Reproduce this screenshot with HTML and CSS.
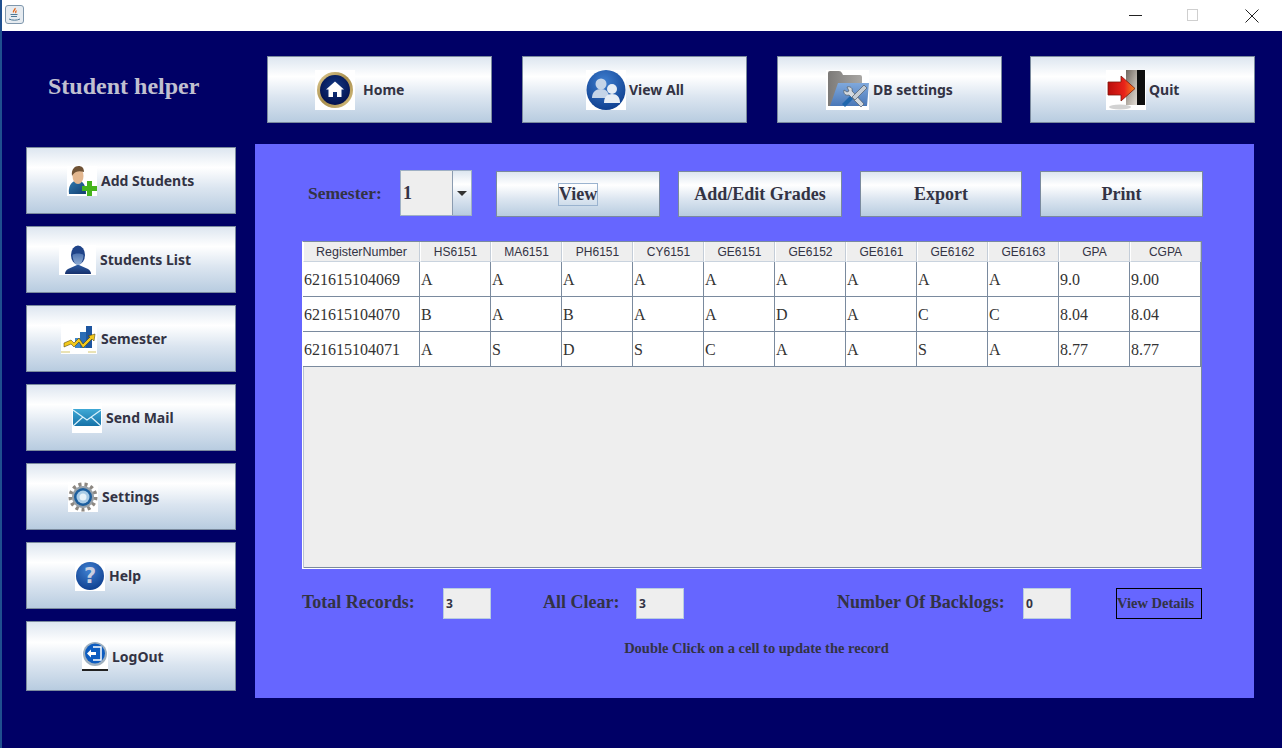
FILE: index.html
```html
<!DOCTYPE html>
<html lang="en">
<head>
<meta charset="utf-8">
<title>Student helper</title>
<link rel="stylesheet" href="styles.css">
</head>
<body>
<svg class="defs" width="0" height="0" aria-hidden="true">
  <defs>
    <radialGradient id="navyBall" cx="50%" cy="40%" r="60%"><stop offset="0" stop-color="#123a86"/><stop offset="1" stop-color="#04124e"/></radialGradient>
    <linearGradient id="gold" x1="0" y1="0" x2="1" y2="1"><stop offset="0" stop-color="#e3cf97"/><stop offset=".5" stop-color="#a88e4c"/><stop offset="1" stop-color="#d8c283"/></linearGradient>
    <radialGradient id="blueBall" cx="45%" cy="30%" r="75%"><stop offset="0" stop-color="#3f7fd0"/><stop offset="1" stop-color="#0c3c8c"/></radialGradient>
    <linearGradient id="folderFront" x1="0" y1="0" x2="0" y2="1"><stop offset="0" stop-color="#7fa8dc"/><stop offset="1" stop-color="#4a78b8"/></linearGradient>
    <linearGradient id="folderBack" x1="0" y1="0" x2="1" y2="0"><stop offset="0" stop-color="#7c7a78"/><stop offset="1" stop-color="#a9a7a4"/></linearGradient>
    <linearGradient id="redArrow" x1="0" y1="0" x2="1" y2="0"><stop offset="0" stop-color="#b90e0c"/><stop offset=".6" stop-color="#e8231a"/><stop offset="1" stop-color="#f58a1f"/></linearGradient>
    <linearGradient id="doorGrey" x1="0" y1="0" x2="1" y2="1"><stop offset="0" stop-color="#6f675f"/><stop offset=".6" stop-color="#bdb6ad"/><stop offset="1" stop-color="#e6e1da"/></linearGradient>
    <linearGradient id="mailBlue" x1="0" y1="0" x2="0" y2="1"><stop offset="0" stop-color="#3fa9d6"/><stop offset="1" stop-color="#1672a8"/></linearGradient>
    <linearGradient id="bustBlue" x1="0" y1="0" x2="0" y2="1"><stop offset="0" stop-color="#2c5aa0"/><stop offset="1" stop-color="#16306c"/></linearGradient>
    <linearGradient id="faceBlue" x1="0" y1="0" x2="0" y2="1"><stop offset="0" stop-color="#4f74b0"/><stop offset="1" stop-color="#90aed6"/></linearGradient>
    <linearGradient id="shirtBlue" x1="0" y1="0" x2="1" y2="1"><stop offset="0" stop-color="#2f78ad"/><stop offset="1" stop-color="#123f72"/></linearGradient>
  </defs>
</svg>
<header class="titlebar">
  <svg class="java-icon" viewBox="0 0 19 19" width="19" height="19">
    <rect x=".5" y=".5" width="18" height="18" rx="2.5" fill="#e6ebf0" stroke="#7f97ad"/>
    <path d="M10 3c1 1.500-2.500 2.500-1.500 4.500M11.500 5.500c-1 .8-1.300 1.500-.5 2.500" fill="none" stroke="#e2661d" stroke-width="1.300"/>
    <path d="M5.500 9.500h7M6 11.500h6M4 14c3 1.600 8 1.600 11 0" fill="none" stroke="#4d7896" stroke-width="1"/>
  </svg>
  <div class="win-controls">
    <span class="win-min"></span>
    <span class="win-max"></span>
    <svg class="win-close" viewBox="0 0 14 14" width="14" height="14"><path d="M.5.500l13 13M13.500.500l-13 13" stroke="#222" stroke-width="1" fill="none"/></svg>
  </div>
</header>

<div class="layout">
  <div class="brand">Student helper</div>

  <nav class="topnav">
    <button class="btn nav-btn home">
      <svg class="ico" viewBox="0 0 40 40" width="40" height="40"><rect width="40" height="40" fill="#fff"/><circle cx="20" cy="20" r="18" fill="url(#gold)"/><circle cx="20" cy="20" r="15" fill="url(#navyBall)"/><path d="M20 11.500 29 19.500h-2.500V27h-4.500v-5h-4v5h-4.500v-7.500H11z" fill="#fff"/></svg>
      <span class="lbl">Home</span>
    </button>
    <button class="btn nav-btn viewall">
      <svg class="ico" viewBox="0 0 40 40" width="40" height="40"><rect width="40" height="40" fill="#fff"/><ellipse cx="20" cy="20" rx="19.500" ry="20" fill="url(#blueBall)"/><circle cx="15" cy="14" r="5.500" fill="#c4d4e8"/><path d="M6 28c0-6 4-9 9-9s8 3 8 9z" fill="#c4d4e8"/><circle cx="26" cy="19" r="5" fill="#e6edf5"/><path d="M18 33c0-6 3-9 8-9s8 3 8 9z" fill="#e6edf5"/></svg>
      <span class="lbl">View All</span>
    </button>
    <button class="btn nav-btn dbset">
      <svg class="ico" viewBox="0 0 43 40" width="43" height="40"><rect width="43" height="40" fill="#fff"/><path d="M2 3q0-2 2-2h9q2 0 3 2l1 2h17q2 0 2 2v29H2z" fill="url(#folderBack)"/><path d="M12 13h31l-2 23H4z" fill="url(#folderFront)"/><path d="M21 17c3-1 6 1 5 4l12 13-3 3-12-12c-3 1-6-1-5-5l3 2 2-1z" fill="#d3d9df" stroke="#4f5a66" stroke-width=".7"/><path d="M38 15l3 3-12 12-3-3z" fill="#c4ccd4" stroke="#4f5a66" stroke-width=".7"/><path d="M27 29l-8 8-3-3 8-8z" fill="#1f66ad"/></svg>
      <span class="lbl">DB settings</span>
    </button>
    <button class="btn nav-btn quit">
      <svg class="ico" viewBox="0 0 40 40" width="40" height="40"><rect width="40" height="40" fill="#fff"/><ellipse cx="14" cy="37" rx="11" ry="2.500" fill="#d2d2d2"/><path d="M20 0h12v35H20z" fill="url(#doorGrey)"/><path d="M31 0h8v35h-8z" fill="#0e0e0e"/><path d="M2 12h13V6l14 12.500L15 31v-6H2z" fill="url(#redArrow)" stroke="#7c160c" stroke-width=".8"/></svg>
      <span class="lbl">Quit</span>
    </button>
  </nav>

  <aside class="sidebar">
    <button class="btn side-btn add">
      <svg class="ico" viewBox="0 0 30 30" width="30" height="30"><rect width="30" height="30" fill="#fff"/><path d="M2 28c-1-7 2-12 6-13h5c4 1 6 6 6 13z" fill="url(#shirtBlue)"/><ellipse cx="11" cy="10" rx="5.500" ry="8" fill="#e3b78f"/><path d="M5 10C4 3 8 0 11.500 0S17 2 17 6c-3-1-6-1-8 0-2 1-3 2-4 4z" fill="#6f5235"/><path d="M20 15h5v5h5v5h-5v5h-5v-5h-5v-5h5z" fill="#45b41c"/></svg>
      <span class="lbl">Add Students</span>
    </button>
    <button class="btn side-btn list">
      <svg class="ico" viewBox="0 0 37 30" width="37" height="30"><rect width="37" height="30" fill="#fff"/><path d="M6 29c0-2 1-4 3-5l9-4h2l9 4c2 1 3 3 3 5z" fill="url(#bustBlue)"/><ellipse cx="19" cy="10" rx="7" ry="9.500" fill="#1f4388"/><path d="M13.500 10c2-2 9-2 11 0-.3 6-2.500 10-5.500 10s-5.200-4-5.500-10z" fill="url(#faceBlue)"/></svg>
      <span class="lbl">Students List</span>
    </button>
    <button class="btn side-btn sem">
      <svg class="ico" viewBox="0 0 36 30" width="36" height="30"><rect width="36" height="30" fill="#fff"/><rect x="14" y="14" width="5" height="10" fill="#3f86cc"/><rect x="19" y="8" width="6" height="16" fill="#2b6cb6"/><rect x="25" y="2" width="6" height="22" fill="#1d55a0"/><path d="M3 19l7-3 3 3 5-5 4 6 7-7-2-1 7-2-1 7-2-2-9 9-4-6-5 5-3-3-7 3z" fill="#f2c81d" stroke="#3c3206" stroke-width=".5"/><path d="M0 28h9M27 28h8" stroke="#d4c56a" stroke-width="1"/></svg>
      <span class="lbl">Semester</span>
    </button>
    <button class="btn side-btn mail">
      <svg class="ico" viewBox="0 0 30 30" width="30" height="30"><rect width="30" height="30" fill="#fff"/><rect x="1" y="6" width="28" height="17" fill="url(#mailBlue)"/><path d="M1 7l14 10L29 7M1 23l10-9M29 23l-10-9" fill="none" stroke="#d8f0fb" stroke-width="1.200"/></svg>
      <span class="lbl">Send Mail</span>
    </button>
    <button class="btn side-btn set">
      <svg class="ico" viewBox="0 0 30 30" width="30" height="30"><rect width="30" height="30" fill="#fff"/><circle cx="15" cy="15" r="12.500" fill="none" stroke="#8d8882" stroke-width="4" stroke-dasharray="3 3"/><circle cx="15" cy="15" r="11" fill="#97a0a8"/><circle cx="15" cy="15" r="9" fill="#1c5e9e"/><circle cx="15" cy="15" r="6.500" fill="#a9cbe6"/><circle cx="15" cy="15" r="3.500" fill="#e8f2f9"/></svg>
      <span class="lbl">Settings</span>
    </button>
    <button class="btn side-btn help">
      <svg class="ico" viewBox="0 0 30 30" width="30" height="30"><rect width="30" height="30" fill="#fff"/><circle cx="15" cy="15" r="14" fill="url(#blueBall)"/><text class="q-mark" x="15" y="22" text-anchor="middle">?</text></svg>
      <span class="lbl">Help</span>
    </button>
    <button class="btn side-btn logout">
      <svg class="ico" viewBox="0 0 26 29" width="26" height="29"><rect width="26" height="29" fill="#fff"/><circle cx="13" cy="12" r="12" fill="#9fb0bf"/><circle cx="13" cy="11.500" r="10" fill="#0d5cc0"/><path d="M11 5h8v13h-8" fill="none" stroke="#fff" stroke-width="1.500"/><path d="M5 11.500l4-4v2.500h5v3H9v2.500z" fill="#fff"/><rect y="27" width="26" height="2" fill="#222"/></svg>
      <span class="lbl">LogOut</span>
    </button>
  </aside>

  <main class="panel">
    <div class="toolbar">
      <label class="sem-label">Semester:</label>
      <div class="combo">
        <span class="combo-value">1</span>
        <span class="combo-arrow"></span>
      </div>
      <button class="btn tool-btn w164"><span class="focus">View</span></button>
      <button class="btn tool-btn w164">Add/Edit Grades</button>
      <button class="btn tool-btn w162">Export</button>
      <button class="btn tool-btn w163">Print</button>
    </div>

    <div class="table-wrap">
      <table class="grid">
        <colgroup><col class="c-reg"><col span="11" class="c-sub"></colgroup>
        <thead>
          <tr><th class="th-reg">RegisterNumber</th><th>HS6151</th><th>MA6151</th><th>PH6151</th><th>CY6151</th><th>GE6151</th><th>GE6152</th><th>GE6161</th><th>GE6162</th><th>GE6163</th><th>GPA</th><th>CGPA</th></tr>
        </thead>
        <tbody>
          <tr><td>621615104069</td><td>A</td><td>A</td><td>A</td><td>A</td><td>A</td><td>A</td><td>A</td><td>A</td><td>A</td><td>9.0</td><td>9.00</td></tr>
          <tr><td>621615104070</td><td>B</td><td>A</td><td>B</td><td>A</td><td>A</td><td>D</td><td>A</td><td>C</td><td>C</td><td>8.04</td><td>8.04</td></tr>
          <tr><td>621615104071</td><td>A</td><td>S</td><td>D</td><td>S</td><td>C</td><td>A</td><td>A</td><td>S</td><td>A</td><td>8.77</td><td>8.77</td></tr>
        </tbody>
      </table>
    </div>

    <div class="stats">
      <span class="stat-label l-total">Total Records:</span>
      <span class="stat-box">3</span>
      <span class="stat-label l-clear">All Clear:</span>
      <span class="stat-box">3</span>
      <span class="stat-label l-back">Number Of Backlogs:</span>
      <span class="stat-box">0</span>
      <button class="details">View Details</button>
    </div>

    <p class="note">Double Click on a cell to update the record</p>
  </main>
</div>
</body>
</html>
```
FILE: styles.css
```css
* { box-sizing: border-box; }

html, body { margin: 0; padding: 0; }

body {
  width: 1282px;
  height: 748px;
  overflow: hidden;
  background: #000066;
  border-left: 2px solid #1f4f8f;
  font-family: "Liberation Serif", serif;
  color: #333344;
}

.defs { display: block; height: 0; }

.titlebar {
  height: 31px;
  margin-left: -2px;
  background: #fff;
  display: flex;
  align-items: flex-start;
  justify-content: space-between;
  padding: 5px 23px 0 5px;
}

.java-icon { display: block; }

.win-controls { display: flex; align-items: flex-start; }

.win-min {
  width: 13px;
  height: 1px;
  margin-top: 10px;
  background: #222;
}

.win-max {
  width: 11px;
  height: 12px;
  margin: 4px 0 0 45px;
  border: 1px solid #cfcfcf;
}

.win-close { margin: 4px 0 0 47px; }

.layout {
  display: grid;
  grid-template-columns: 253px 999px;
  grid-template-rows: 113px 554px;
}

.brand {
  padding: 41px 0 0 46px;
  font-size: 24px;
  line-height: 28px;
  font-weight: bold;
  color: #c0c0d0;
}

.btn {
  display: flex;
  flex: none;
  align-items: center;
  padding: 0;
  border: 1px solid #7a8a9e;
  background: linear-gradient(180deg, #dde6f0 0%, #ffffff 30%, #dbe5f0 62%, #b8cce0 100%);
  color: #333344;
  font-weight: bold;
}

.lbl { display: block; }

.ico { display: block; flex: none; }

.topnav {
  display: flex;
  align-items: flex-start;
  gap: 30px;
  padding: 25px 0 0 12px;
}

.nav-btn {
  width: 225px;
  height: 67px;
  font-family: "Noto Sans", sans-serif;
  font-size: 14px;
}

.quit { margin-left: -2px; }

.home { padding-left: 47px; }
.home .lbl { margin-left: 8px; }
.viewall { padding-left: 63px; }
.viewall .lbl { margin-left: 3px; }
.dbset { padding-left: 48px; }
.dbset .lbl { margin-left: 4px; }
.quit { padding-left: 75px; }
.quit .lbl { margin-left: 3px; }

.sidebar {
  display: flex;
  flex-direction: column;
  gap: 12px;
  padding: 3px 0 0 24px;
}

.side-btn {
  width: 210px;
  height: 67px;
  font-family: "Noto Sans", sans-serif;
  font-size: 14px;
}

.side-btn .lbl { margin-left: 4px; }

.add { padding-left: 40px; }
.list { padding-left: 32px; }
.sem { padding-left: 34px; }
.mail { padding-left: 45px; }
.set { padding-left: 41px; }
.help { padding-left: 48px; }
.logout { height: 70px; padding-left: 55px; }

.panel {
  background: #6666ff;
  padding: 27px 0 0 47px;
}

.toolbar {
  display: flex;
  align-items: flex-start;
  gap: 18px;
  padding-left: 6px;
}

.sem-label {
  width: 74px;
  font-size: 17.500px;
  line-height: 45px;
  font-weight: bold;
}

.combo {
  display: flex;
  width: 72px;
  height: 46px;
  margin: -1px 6px 0 0;
  border: 1px solid #9fb0c4;
}

.combo-value {
  flex: 1;
  background: #eeeeee;
  padding: 1px 0 0 2px;
  font-size: 18px;
  line-height: 42px;
  font-weight: bold;
}

.combo-arrow {
  position: relative;
  width: 19px;
  border-left: 1px solid #8a9bb0;
  background: linear-gradient(180deg, #dde6f0 0%, #ffffff 30%, #dbe5f0 62%, #b8cce0 100%);
}

.combo-arrow::after {
  content: "";
  position: absolute;
  left: 4px;
  top: 20px;
  border-left: 5px solid transparent;
  border-right: 5px solid transparent;
  border-top: 5px solid #333;
}

.tool-btn {
  justify-content: center;
  height: 46px;
  font-family: "Liberation Serif", serif;
  font-size: 18px;
}

.w164 { width: 164px; }
.w162 { width: 162px; }
.w163 { width: 163px; }

.focus {
  display: block;
  padding: 0;
  border: 1px solid #9ab3cf;
  line-height: 21px;
}

.table-wrap {
  width: 900px;
  height: 328px;
  margin-top: 24px;
  background: #eeeeee;
  border: 1px solid #7a8a9e;
  border-left-color: #fff;
  border-bottom-color: #fff;
  box-shadow: inset 1px 0 0 #b9c4d0, inset 0 -1px 0 #7a8a9e;
}

.grid {
  table-layout: fixed;
  width: 898px;
  border-collapse: separate;
  border-spacing: 0;
  background: #fff;
}

.c-reg { width: 117px; }
.c-sub { width: 71px; }

.grid th {
  height: 20px;
  padding: 0;
  background: #eeeeee;
  border-left: 1px solid #fff;
  border-right: 1px solid #c4cdd8;
  border-bottom: 1px solid #c9d3de;
  font-family: "Liberation Sans", sans-serif;
  font-size: 12px;
  font-weight: normal;
  color: #333344;
  text-align: center;
}

.grid .th-reg { font-size: 12.500px; }

.grid td {
  height: 35px;
  padding: 2px 0 0 1px;
  border-right: 1px solid #7a8a9e;
  border-bottom: 1px solid #7a8a9e;
  font-size: 16px;
  color: #333333;
}

.stats {
  display: flex;
  align-items: center;
  height: 31px;
  width: 900px;
  margin-top: 19px;
}

.stat-label {
  font-size: 18px;
  line-height: 29px;
  align-self: flex-start;
  font-weight: bold;
}

.l-total { width: 141px; }
.l-clear { width: 93px; margin-left: 52px; }
.l-back { width: 186px; margin-left: 153px; }

.stat-box {
  width: 48px;
  height: 31px;
  padding-left: 2px;
  background: #eeeeee;
  border: 1px solid #b8cce0;
  font-family: "Noto Sans", sans-serif;
  font-size: 12px;
  font-weight: bold;
  line-height: 29px;
}

.details {
  width: 86px;
  height: 31px;
  margin-left: 45px;
  padding: 0;
  text-align: left;
  background: transparent;
  border: 1px solid #000;
  font-family: "Liberation Serif", serif;
  font-size: 14.500px;
  font-weight: bold;
  color: #333344;
}

.note {
  width: 900px;
  margin: 21px 0 0;
  padding-left: 9px;
  text-align: center;
  font-size: 14.500px;
  line-height: 16px;
  font-weight: bold;
}

.q-mark {
  font-family: "DejaVu Sans", sans-serif;
  font-size: 21px;
  font-weight: bold;
  fill: #c9cfe0;
}
```
